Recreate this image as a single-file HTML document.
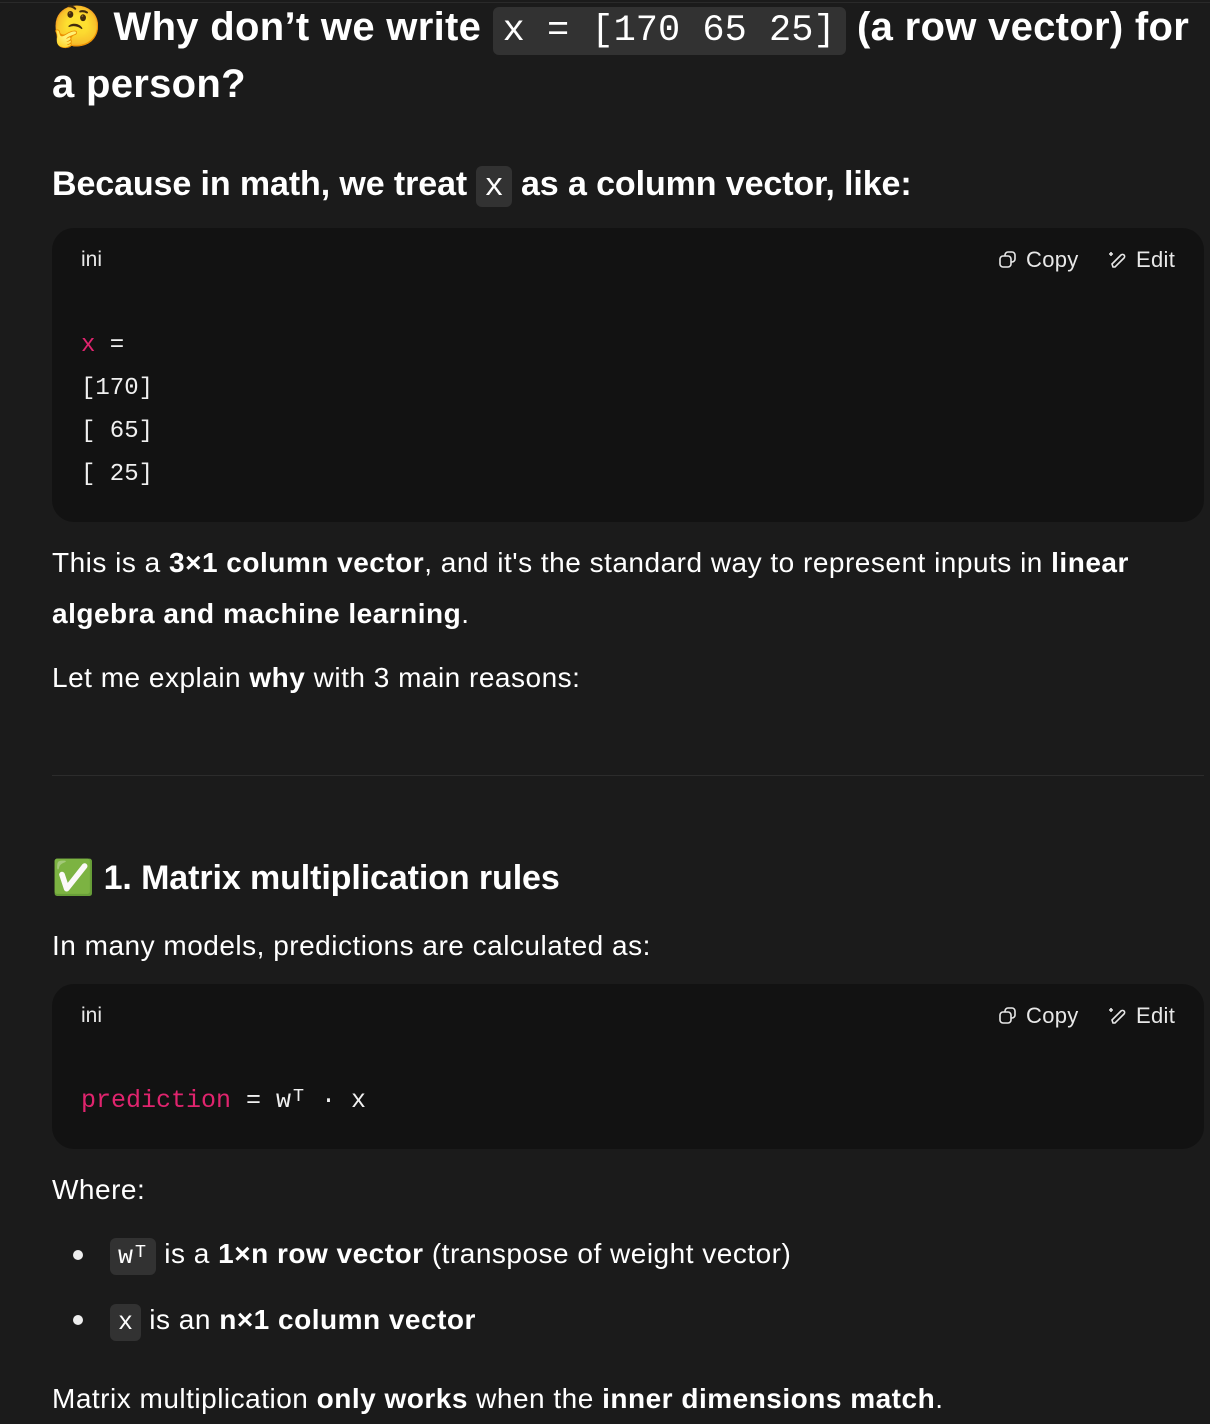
<!DOCTYPE html>
<html><head><meta charset="utf-8"><style>
*{margin:0;padding:0;box-sizing:border-box}
body{width:1210px;height:1424px;background:#1b1b1b;color:#fff;font-family:"Liberation Sans","Noto Color Emoji",sans-serif;position:relative;overflow:hidden}
.a{position:absolute;white-space:nowrap}
.h1{font-size:40px;font-weight:700;letter-spacing:0.3px}
.h2{font-size:34px;font-weight:700;letter-spacing:-0.1px}
.p{font-size:28px;letter-spacing:0.5px}
b{font-weight:700}
.c{font-family:"Liberation Mono",monospace;background:#323232;border-radius:6px;padding:0 8px;font-weight:400;letter-spacing:0}
.blk{position:absolute;left:52px;width:1152px;background:#121212;border-radius:22px}
.lang{position:absolute;left:29px;font-size:21px;color:#e8e8e8}
.btn{position:absolute;font-size:22px;color:#e8e8e8;display:flex;align-items:center;gap:8px;letter-spacing:0.3px}
.m{position:absolute;font-family:"Liberation Mono",monospace;font-size:24px;color:#f0f0f0;white-space:pre}
.pk{color:#e0246e}
</style></head><body>
<div style="position:absolute;left:0;top:2px;width:1210px;height:1px;background:#2a2a2a"></div>
<div class="a h1" style="left:52px;top:3px">🤔 Why don’t we write <span class="c" style="font-size:37px;padding:3px 10px;">x = [170 65 25]</span> (a row vector) for</div>
<div class="a h1" style="left:52px;top:62px">a person?</div>
<div class="a h2" style="left:52px;top:165px">Because in math, we treat <span class="c" style="font-size:32px;padding:2px 8px">x</span> as a column vector, like:</div>

<div class="blk" style="top:228px;height:294px">
<div class="lang" style="top:20px">ini</div>
<div class="btn" style="left:946px;top:19px"><svg width="20" height="20" viewBox="0 0 20 20" fill="none" stroke="#e8e8e8" stroke-width="1.6"><rect x="2" y="6" width="11" height="11" rx="3"/><path d="M7 6V5a3 3 0 0 1 3-3h4a3 3 0 0 1 3 3v4a3 3 0 0 1-3 3h-1"/></svg>Copy</div>
<div class="btn" style="left:1056px;top:19px"><svg width="20" height="20" viewBox="0 0 20 20" fill="none" stroke="#e8e8e8" stroke-width="1.6"><path d="M5 17l-1-3L13 5a2 2 0 0 1 3 3l-9 9z"/><path d="M3 2v4M1 4h4"/></svg>Edit</div>
<div class="m" style="left:29px;top:96px;line-height:43px"><span class="pk">x</span> =
[170]
[ 65]
[ 25]</div>
</div>

<div class="a p" style="left:52px;top:547px">This is a <b>3×1 column vector</b>, and it's the standard way to represent inputs in <b>linear</b></div>
<div class="a p" style="left:52px;top:598px"><b>algebra and machine learning</b>.</div>
<div class="a p" style="left:52px;top:662px">Let me explain <b>why</b> with 3 main reasons:</div>
<div style="position:absolute;left:52px;top:775px;width:1152px;height:1px;background:#2c2c2c"></div>
<div class="a h2" style="left:52px;top:858px">✅ 1. Matrix multiplication rules</div>
<div class="a p" style="left:52px;top:930px">In many models, predictions are calculated as:</div>

<div class="blk" style="top:984px;height:165px">
<div class="lang" style="top:20px">ini</div>
<div class="btn" style="left:946px;top:19px"><svg width="20" height="20" viewBox="0 0 20 20" fill="none" stroke="#e8e8e8" stroke-width="1.6"><rect x="2" y="6" width="11" height="11" rx="3"/><path d="M7 6V5a3 3 0 0 1 3-3h4a3 3 0 0 1 3 3v4a3 3 0 0 1-3 3h-1"/></svg>Copy</div>
<div class="btn" style="left:1056px;top:19px"><svg width="20" height="20" viewBox="0 0 20 20" fill="none" stroke="#e8e8e8" stroke-width="1.6"><path d="M5 17l-1-3L13 5a2 2 0 0 1 3 3l-9 9z"/><path d="M3 2v4M1 4h4"/></svg>Edit</div>
<div class="m" style="left:29px;top:102px;font-size:25px"><span class="pk">prediction</span> = wᵀ · x</div>
</div>

<div class="a p" style="left:52px;top:1174px">Where:</div>
<div class="a" style="left:73px;top:1250px;width:10px;height:10px;border-radius:50%;background:#eee"></div>
<div class="a p" style="left:110px;top:1238px"><span class="c" style="font-size:25px;padding:4px 8px">wᵀ</span> is a <b>1×n row vector</b> (transpose of weight vector)</div>
<div class="a" style="left:73px;top:1315px;width:10px;height:10px;border-radius:50%;background:#eee"></div>
<div class="a p" style="left:110px;top:1304px"><span class="c" style="font-size:25px;padding:4px 8px">x</span> is an <b>n×1 column vector</b></div>
<div class="a p" style="left:52px;top:1383px">Matrix multiplication <b>only works</b> when the <b>inner dimensions match</b>.</div>
</body></html>
